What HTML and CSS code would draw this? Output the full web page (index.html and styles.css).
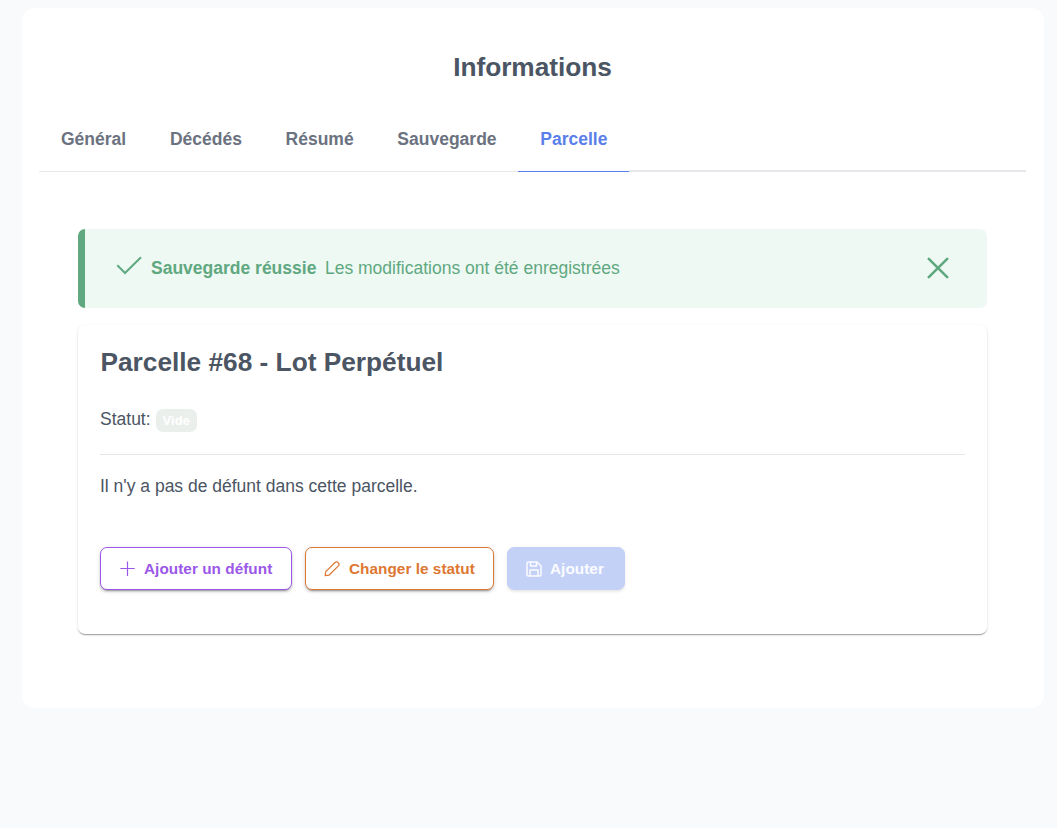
FILE: index.html
```html
<!DOCTYPE html>
<html lang="fr">
<head>
<meta charset="utf-8">
<title>Informations</title>
<link rel="stylesheet" href="styles.css">
</head>
<body>
<main class="panel">
  <h1 class="title">Informations</h1>
  <nav class="tabs">
    <a class="tab">Général</a>
    <a class="tab">Décédés</a>
    <a class="tab">Résumé</a>
    <a class="tab">Sauvegarde</a>
    <a class="tab active">Parcelle</a>
    <span class="tabs-rest"></span>
  </nav>
  <section class="content">
    <div class="message">
      <svg class="check" viewBox="0 0 26 19" width="26" height="19"><path d="M1.3 9.3 9 17 25 1.2"/></svg>
      <strong class="summary">Sauvegarde réussie</strong>
      <span class="detail">Les modifications ont été enregistrées</span>
      <svg class="close" viewBox="0 0 22 22" width="22" height="22"><path d="M1.8 1.8 20.2 20.2M20.2 1.8 1.8 20.2"/></svg>
    </div>
    <article class="card">
      <h2 class="card-title">Parcelle #68 - Lot Perpétuel</h2>
      <p class="status">Statut: <span class="tag">Vide</span></p>
      <p class="empty">Il n'y a pas de défunt dans cette parcelle.</p>
      <div class="actions">
        <button class="btn purple">
          <svg viewBox="0 0 16 16" width="16" height="16"><path d="M7.5 .6v14.4M.3 7.5h14.4"/></svg>
          <span>Ajouter un défunt</span>
        </button>
        <button class="btn orange">
          <svg viewBox="0 0 16 16" width="16" height="16"><path d="M1.2 14.6 1.6 10.9 11 1.5Q12.6.1 14.2 1.6 15.8 3.3 14.4 4.9L5 14.2Z"/></svg>
          <span>Changer le statut</span>
        </button>
        <button class="btn primary" disabled>
          <svg viewBox="0 0 16 16" width="16" height="16"><path d="M2.5 1H11L15 5V13.5Q15 15 13.5 15H2.5Q1 15 1 13.5V2.5Q1 1 2.5 1ZM4 15V9H12V15M4.5 1V5H10.5V1"/></svg>
          <span>Ajouter</span>
        </button>
      </div>
    </article>
  </section>
</main>
</body>
</html>
```
FILE: styles.css
```css
* { box-sizing: border-box; }
body {
  margin: 0;
  padding: 8px 13px 0 22px;
  background: #f9fafc;
  color: #4b5563;
  font: 17.5px/26px "Liberation Sans", Arial, sans-serif;
}
h1, h2, p { margin: 0; }
.panel {
  height: 700px;
  padding: 43px 18px 0 17px;
  border-radius: 13px;
  background: #fff;
}
.title {
  font-size: 26.25px;
  line-height: 32px;
  text-align: center;
  letter-spacing: -.04px;
}
.tabs {
  display: flex;
  height: 65px;
  margin-top: 24px;
}
.tab {
  padding: 19px 21.7px 0 22px;
  border-bottom: 1px solid #e5e7eb;
  color: #6b7280;
  font-weight: 700;
  line-height: 26px;
}
.tab.active { padding-right: 21.4px; border-color: #5b7fea; color: #5b7fea; }
.tabs-rest { flex: 1; border-bottom: 2px solid #e5e7eb; }
.content { padding: 57px 39px 0; }
.message {
  display: flex;
  align-items: center;
  height: 79px;
  padding: 0 38px 2px 31px;
  border-left: 7px solid #5fa880;
  border-radius: 7px;
  background: #eef9f4;
  color: #5fa880;
}
.message svg, .btn svg { flex: none; fill: none; stroke: currentColor; }
.check { margin: -4px 9px 0 0; stroke-width: 2; }
.close { margin-left: auto; stroke-width: 2.6; stroke-linecap: round; }
.summary { margin-right: 8.6px; }
.card {
  height: 309px;
  margin-top: 17px;
  padding: 20px 22px 0;
  border-radius: 7px;
  background: #fff;
  box-shadow: 0 2px 1px -1px rgba(0, 0, 0, .2), 0 1px 1px rgba(0, 0, 0, .14), 0 1px 3px rgba(0, 0, 0, .12);
}
.card-title { padding-left: .5px; font-size: 26.25px; line-height: 34px; }
.status {
  display: flex;
  height: 50px;
  margin-top: 26px;
  padding-top: 1px;
  border-bottom: 1px solid #e5e7eb;
  gap: 5px;
}
.status .tag {
  height: 23px;
  margin-top: 3px;
  padding: 0 7px;
  border-radius: 7px;
  background: #ebefec;
  color: #fff;
  font-size: 13.1px;
  font-weight: 700;
  line-height: 23px;
}
.empty { margin-top: 18px; }
.actions { display: flex; gap: 13px; margin-top: 48px; }
.btn {
  display: flex;
  align-items: center;
  gap: 8px;
  height: 43px;
  padding: 0 19px;
  border: 1px solid currentColor;
  border-radius: 7px;
  background: #fff;
  font: 700 15.3px/20px "Liberation Sans", Arial, sans-serif;
  letter-spacing: .05px;
  white-space: nowrap;
  box-shadow: 0 3px 1px -2px rgba(0, 0, 0, .2), 0 2px 2px rgba(0, 0, 0, .14), 0 1px 5px rgba(0, 0, 0, .12);
}
.btn svg { stroke-width: 1.2; stroke-linejoin: round; }
.purple { width: 192px; color: #9b57e8; }
.orange { width: 189px; padding-left: 18px; gap: 9px; color: #dd7732; }
.primary {
  width: 118px;
  padding-left: 18px;
  border-color: #c4d1f7;
  background: #c4d1f7;
  color: #fbfcff;
  box-shadow: 0 2px 2px rgba(0, 0, 0, .05), 0 1px 5px rgba(0, 0, 0, .06);
}
.primary svg { stroke-width: 1.5; }
```
